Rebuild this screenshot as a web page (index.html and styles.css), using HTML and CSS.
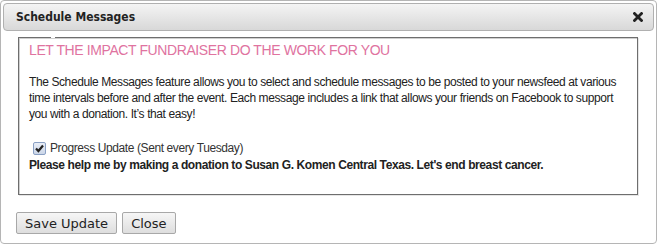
FILE: index.html
```html
<!DOCTYPE html>
<html>
<head>
<meta charset="utf-8">
<link rel="stylesheet" href="styles.css">
</head>
<body>
<div class="dialog">
  <div class="titlebar">
    <span class="title">Schedule Messages</span>
    <span class="close" aria-label="close">
      <svg width="10" height="10" viewBox="0 0 10 10"><path d="M1.5 1.5 L8.5 8.5 M8.5 1.5 L1.5 8.5" stroke="#222" stroke-width="2.8" stroke-linecap="square"/></svg>
    </span>
  </div>
  <div class="content">
    <fieldset class="box">
      <legend class="legend"></legend>
      <h2 class="heading">LET THE IMPACT FUNDRAISER DO THE WORK FOR YOU</h2>
      <p class="intro">The Schedule Messages feature allows you to select and schedule messages to be posted to your newsfeed at various time intervals before and after the event. Each message includes a link that allows your friends on Facebook to support you with a donation. It’s that easy!</p>
      <label class="option">
        <span class="check"><svg width="11" height="11" viewBox="0 0 11 11"><path d="M2 5.5 L4.4 8 L9 2.5" fill="none" stroke="#222" stroke-width="2.2"/></svg></span>
        <span>Progress Update (Sent every Tuesday)</span>
      </label>
      <p class="message">Please help me by making a donation to Susan G. Komen Central Texas. Let's end breast cancer.</p>
    </fieldset>
    <div class="buttons">
      <button class="btn">Save Update</button>
      <button class="btn">Close</button>
    </div>
  </div>
</div>
</body>
</html>
```
FILE: styles.css
```css
html, body {
  margin: 0;
  padding: 0;
  background: #fff;
}
.dialog {
  box-sizing: border-box;
  width: 657px;
  height: 244px;
  border: 1px solid #b5b5b5;
  border-radius: 4px;
  padding: 2px;
  background: #fff;
}
.titlebar {
  box-sizing: border-box;
  height: 28px;
  border: 1px solid #b0b0b0;
  border-radius: 4px;
  background: linear-gradient(#f4f4f4, #d8d8d8);
  display: flex;
  align-items: center;
  justify-content: space-between;
  padding: 0 10px 0 12px;
}
.title {
  font-family: "DejaVu Sans Condensed", "DejaVu Sans", Verdana, sans-serif;
  font-weight: bold;
  font-size: 12px;
  color: #222;
}
.close {
  display: flex;
}
.content {
  padding: 6px 0 0 15px;
}
.box {
  box-sizing: border-box;
  width: 620px;
  height: 158px;
  margin: 0;
  padding: 2px 10px 0 10px;
  border: 1px solid #6e6e6e;
  box-shadow: inset 1px 1px 0 #cfcfcf, 1px 1px 0 #e6e6e6;
  font-family: "Liberation Sans", Arial, sans-serif;
}
.legend {
  padding: 0;
  margin-left: 22px;
  width: 4px;
  height: 0;
}
.heading {
  margin: 0;
  font-size: 14px;
  letter-spacing: -0.4px;
  font-weight: normal;
  color: #e0739f;
  line-height: 20px;
}
.intro {
  margin: 14px 0 0 0;
  font-size: 12px;
  letter-spacing: -0.4px;
  line-height: 16px;
  color: #222;
}
.option {
  display: flex;
  align-items: center;
  gap: 4px;
  margin: 18px 0 0 4px;
  font-size: 12px;
  letter-spacing: -0.4px;
  line-height: 16px;
  color: #333;
}
.check {
  box-sizing: border-box;
  width: 13px;
  height: 13px;
  border: 1px solid #8aa0c4;
  border-radius: 2px;
  background: linear-gradient(#e9eef7, #cbd6e8);
  display: flex;
  align-items: center;
  justify-content: center;
}
.message {
  margin: 1px 0 0 0;
  font-size: 12px;
  letter-spacing: -0.4px;
  font-weight: bold;
  line-height: 16px;
  color: #222;
}
.buttons {
  display: flex;
  gap: 5px;
  margin: 17px 0 0 -2px;
}
.btn {
  box-sizing: border-box;
  height: 22px;
  padding: 0 8px;
  font-family: "DejaVu Sans", Verdana, sans-serif;
  font-size: 13px;
  color: #222;
  border: 1px solid #a8a8a8;
  border-radius: 2px;
  background: linear-gradient(#f6f6f6, #dedede);
}
```
